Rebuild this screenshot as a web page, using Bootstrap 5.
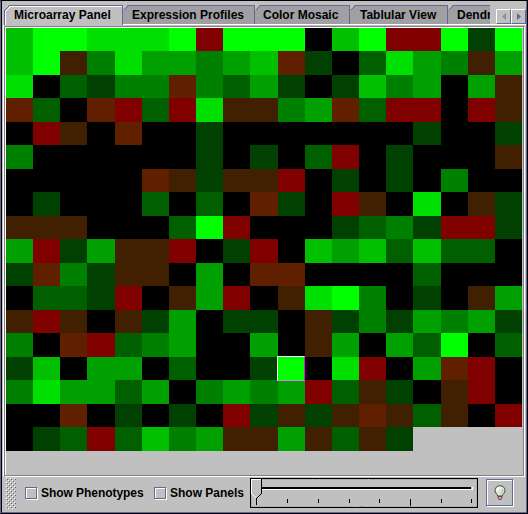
<!DOCTYPE html>
<html lang="en">
<head>
<meta charset="utf-8">
<title>Microarray Panel</title>
<link href="https://cdn.jsdelivr.net/npm/bootstrap@5.3.0/dist/css/bootstrap.min.css" rel="stylesheet">
<style>
:root{--face:#c0c0c0;--slate:#666699}
body{width:528px;height:514px;background:var(--face);font:bold 12px/15px "Liberation Sans",Arial,sans-serif;color:#000}
.window{width:528px;height:514px;border:1px solid #000;border-left-color:var(--slate)}
.window-inner{border-left:1px solid #000;border-right:1px solid var(--slate);border-bottom:1px solid var(--slate);background:var(--face)}
.tabstrip{height:24px;padding:4px 0 0 2px}
.pane-tab{height:19px;background:#a0a0a4;border-top:1px solid var(--slate);border-right:1px solid var(--slate);white-space:nowrap;padding-top:2px;clip-path:polygon(5px 0,100% 0,100% 100%,0 100%,0 5px)}
.pane-tab svg{left:0;top:-1px}
.pane-tab.chosen{background:var(--face);height:20px;border-top-color:var(--slate);box-shadow:inset 0 1px #fff}
.t1{width:119px;padding-left:10px}.t2{width:132px;padding-left:9px}.t3{width:95px;padding-left:8px}.t4{width:98px;padding-left:10px}.t5{width:42px;padding-left:9px;border-right:0}
.strip-rule{height:20px;border-bottom:1px solid #fff}
.arrow{width:15px;height:15px;border:1px solid #fff;border-right-color:var(--slate);border-bottom-color:var(--slate);margin-top:4px;background:var(--face)}
.well{margin:0 2px 0 1px;height:451px;border-left:1px solid #fff;padding-top:1px}
.etched{height:450px;width:520px;border:1px solid gray;box-shadow:inset 1px 1px #fff,1px 1px #fff;padding:1px 0 0 1px}
.heat{display:grid;width:516px;grid-template-columns:27px 27px 27px 28px 27px 27px 27px 27px 27px 28px 27px 27px 27px 27px 27px 28px 27px 27px 27px;grid-template-rows:repeat(9,23px 24px)}
.lv-0{background:#000}.lv-a{background:#004000}.lv-b{background:#006000}.lv-c{background:#008000}.lv-d{background:#00a000}.lv-e{background:#00c000}.lv-f{background:#00e000}.lv-g{background:#0f0}.lv-n{background:#402000}.lv-o{background:#602000}.lv-r{background:maroon}
.picked{margin:-1px 0 -1px -1px;border:1px solid #fff;border-right-color:#f0f;border-bottom-color:#e080e0;position:relative}
.tools{height:36px;padding:2px 0 0 4px}
.box{width:12px;height:12px;border:1px solid var(--slate);box-shadow:inset 1px 1px #fff,1px 1px #fff;margin-top:9px}
.box-first{margin-left:9px}
.cap{margin-top:8px;white-space:nowrap}
.cap1{width:113px;padding-left:4px;letter-spacing:-.05px}.cap2{width:84px;padding-left:4px}
.bulb{width:27px;height:27px;border:1px solid var(--slate);box-shadow:inset 1px 1px #fff,1px 1px #fff;margin:1px 0 0 8px}
svg{display:block;flex:none}
</style>
</head>
<body class="m-0 overflow-hidden">
<div class="window">
<div class="window-inner h-100 d-flex flex-column">
  <div class="tabstrip d-flex">
    <div class="pane-tab chosen t1 position-relative"><svg class="position-absolute" width="6" height="20" shape-rendering="crispEdges"><path d="M.5 20V5.5L5.5.5" stroke="#669" fill="none"/><path d="M1.500 20V6.500L6.500 1.500" stroke="#fff" fill="none"/></svg><span>Microarray Panel</span></div>
    <div class="strip-rule d-flex flex-fill">
    <div class="pane-tab t2 position-relative"><svg class="position-absolute" width="6" height="19" shape-rendering="crispEdges"><path d="M.5 5.500L5.500.5" stroke="#669" fill="none"/></svg><span>Expression Profiles</span></div>
    <div class="pane-tab t3 position-relative"><svg class="position-absolute" width="6" height="19" shape-rendering="crispEdges"><path d="M.5 5.500L5.500.5" stroke="#669" fill="none"/></svg><span>Color Mosaic</span></div>
    <div class="pane-tab t4 position-relative"><svg class="position-absolute" width="6" height="19" shape-rendering="crispEdges"><path d="M.5 5.500L5.500.5" stroke="#669" fill="none"/></svg><span>Tablular View</span></div>
    <div class="pane-tab t5 position-relative overflow-hidden"><svg class="position-absolute" width="6" height="19" shape-rendering="crispEdges"><path d="M.5 5.500L5.500.5" stroke="#669" fill="none"/></svg><span>Dendrogram</span></div>
    <div class="arrow ms-auto d-flex align-items-center justify-content-center"><svg width="4" height="7"><path d="M4 0V7L0 3.500Z" fill="#8e8e8e"/></svg></div>
    <div class="arrow d-flex align-items-center justify-content-center"><svg width="4" height="7"><path d="M0 0V7L4 3.500Z" fill="#669"/></svg></div>
    </div>
  </div>
  <div class="well"><div class="etched"><div class="heat" id="heat"></div></div></div>
  <div class="tools d-flex align-items-start">
    <svg width="10" height="31" shape-rendering="crispEdges"><defs><pattern id="grip" width="4" height="4" patternUnits="userSpaceOnUse"><path d="M0 0h1v1h-1zM2 2h1v1h-1z" fill="#fff"/><path d="M1 1h1v1h-1zM3 3h1v1h-1z" fill="#666"/></pattern></defs><rect width="10" height="31" fill="url(#grip)"/></svg>
    <div class="box box-first"></div><div class="cap cap1"><span>Show Phenotypes</span></div>
    <div class="box ms-1"></div><div class="cap cap2"><span>Show Panels</span></div>
    <svg width="228" height="30" shape-rendering="crispEdges">
      <rect x=".5" y=".5" width="227" height="29" fill="#c0c0c0" stroke="#000"/>
      <rect x="1.500" y="1.500" width="225" height="27" fill="none" stroke="#9999b8" stroke-dasharray="1 1"/>
      <path d="M12 9.500H221M12 10.500H221" stroke="#000"/><path d="M12 11.500H222.500V9" stroke="#fff" fill="none"/>
      <path d="M6.500 20V27M37.500 21V25M68.500 21V25M99.500 21V25M129.500 21V25M160.500 21V28M191.500 21V25M221.500 21V25" stroke="#000"/>
      <path d="M1 1H12V15L6.500 20.500L1 15Z" fill="#c0c0c0"/><path d="M1.500 16V1.500H11" fill="none" stroke="#fff"/><path d="M1.500 15.500L6.500 20.500" stroke="#fff"/><path d="M11.500 1V15.500L6.500 20.500" fill="none" stroke="#000"/>
    </svg>
    <div class="bulb d-flex align-items-center justify-content-center"><svg width="12" height="16"><path d="M6 .8C2.800.8 1 3 1 5.400C1 7.800 3.200 9 3.800 11H8.200C8.800 9 11 7.800 11 5.400C11 3 9.200.8 6 .8Z" fill="#dce8d8" stroke="#444"/><path d="M3.200 6C3 4 4.500 2.500 6 2.500" fill="none" stroke="#fff" stroke-width="2"/><path d="M8.500 4C9 6 8 7.500 6.500 9" fill="none" stroke="#9db59d"/><path d="M4 11.500H8V13L7 14.500H5L4 13Z" fill="#d8a0b8" stroke="#483040" stroke-width=".8"/></svg></div>
  </div>
</div>
</div>
<script src="https://cdn.jsdelivr.net/npm/bootstrap@5.3.0/dist/js/bootstrap.bundle.min.js"></script>
<script>
// One letter per spot: 0 is black, a-g are rising greens, n, o and r are rising reds.
const rows = ["eggfffgrggg0egrrgag","egncfddcdeoa0bfdcnd","f0baccocbda0aecd0dn","ob0orbrfnncdobrr0rn","0rn0o00a0000000a00a","c000000a0a0br0a000n","00000onannr0a0a0c00","0a000b0b0oa0rn0f0na","nnn000bgr000abcarra","dradnnr0ar0edebebb0","aocann0d0oo0000b000","0bbar0ndr0nfgc0a0nd","nrn0nad0aa0nacadcda","c0orbcd00d0nd0dbg0b","ae0dd0b00ag0fr0dor0","cfddbd0cdcdrbna0nr0","00o0a0a0rananonbn0r","0abrbecdnndnbna"];
const heat = document.getElementById("heat");
rows.forEach((row, y) => [...row].forEach((v, x) => {
  const spot = document.createElement("div");
  spot.className = "lv-" + v + (y === 14 && x === 10 ? " picked" : "");
  heat.append(spot);
}));
</script>
</body>
</html>
